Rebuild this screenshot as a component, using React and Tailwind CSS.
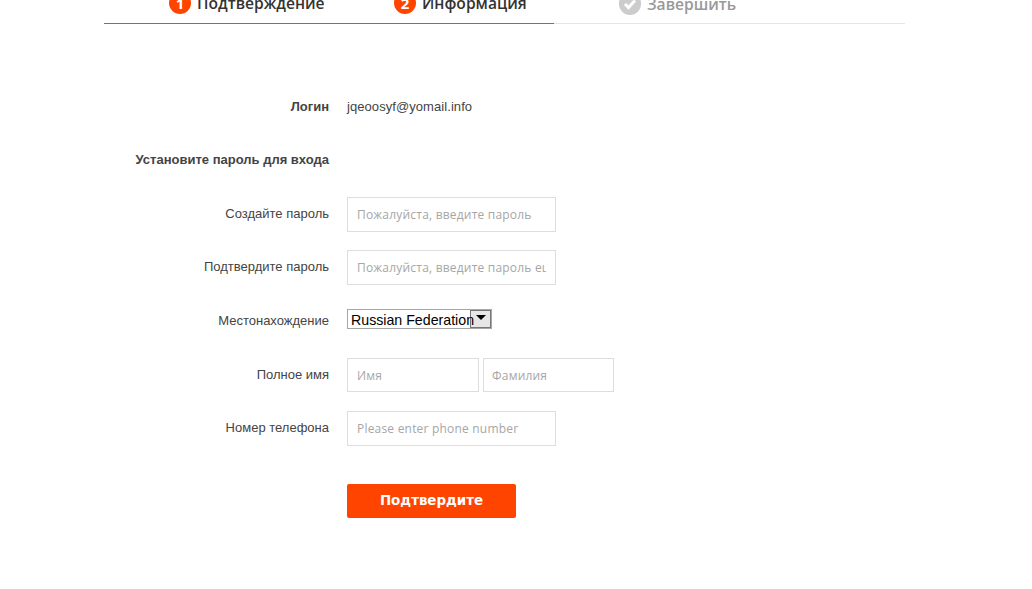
const sans = "font-['Liberation_Sans',Arial,sans-serif]";
const open = "font-['Open_Sans',sans-serif]";

function Step({ mark, label, muted = false, className = "" }) {
  return (
    <div className={`flex shrink-0 items-center gap-[6px] ${className}`}>
      {mark}
      <span className={`text-[15.6px] font-semibold leading-[20px] ${muted ? "text-[#999]" : "text-[#333]"}`}>{label}</span>
    </div>
  );
}

function Num({ n }) {
  return (
    <span className="flex h-[22px] w-[22px] items-center justify-center rounded-full bg-[#ff4400] text-[15px] font-bold text-white">{n}</span>
  );
}

function Check() {
  return (
    <span className="flex h-[23px] w-[22px] items-center justify-center rounded-full bg-[#ccc]">
      <svg viewBox="0 0 16 16" className="h-[16px] w-[16px]" fill="none" stroke="#fff" strokeWidth="3">
        <path d="M3 8l3.5 3.5L13 4.5" />
      </svg>
    </span>
  );
}

function Row({ label, bold = false, className = "", children }) {
  return (
    <div className={`flex items-start gap-[18px] ${className}`}>
      <div className={`w-[329px] shrink-0 text-right text-[13px] text-[#444] ${bold ? "font-bold" : ""}`}>{label}</div>
      {children}
    </div>
  );
}

function Field({ placeholder, className = "h-[35px] w-[209px] px-[9px]" }) {
  return (
    <input
      placeholder={placeholder}
      className={`${className} border border-[#ddd] bg-white ${open} text-[12px] tracking-[0.2px] text-[#333] outline-none placeholder:text-[#a6a6a6]`}
    />
  );
}

export default function App() {
  return (
    <div className={`h-[589px] w-[1032px] overflow-hidden bg-white ${sans}`}>
      <div className={`ml-[104px] mt-[-8px] h-[32px] w-[801px] border-b border-[#e5e5e5] ${open}`}>
        <div className="flex h-[32px] w-[450px] items-start border-b border-[#ff4400] pl-[65px]">
          <Step mark={<Num n="1" />} label="Подтверждение" className="w-[225px]" />
          <Step mark={<Num n="2" />} label="Информация" className="w-[225px]" />
          <Step mark={<Check />} label="Завершить" muted className="gap-[5px]" />
        </div>
      </div>

      <Row label="Логин" bold className="mt-[75px] h-[16px] leading-[16px]">
        <span className="text-[13px] tracking-[0.07px] text-[#444]">jqeoosyf@yomail.info</span>
      </Row>

      <Row label="Установите пароль для входа" bold className="mt-[37px] h-[16px] leading-[16px]" />

      <div className="mt-[29px] flex flex-col">
        <Row label={<span className="block pt-[7px]">Создайте пароль</span>}>
          <Field placeholder="Пожалуйста, введите пароль" />
        </Row>
        <Row label={<span className="block pt-[7px]">Подтвердите пароль</span>} className="mt-[18px]">
          <Field placeholder="Пожалуйста, введите пароль еще раз" />
        </Row>
        <Row label={<span className="block pt-[2px]">Местонахождение</span>} className="mt-[24px] h-[49px]">
          <div className="relative h-[20px] w-[145px] border border-[#a6a6a6] bg-white pl-[3px] text-[14.2px] leading-[20px] text-black">
            <span className="relative z-10 whitespace-nowrap">Russian Federation</span>
            <span className="absolute right-0 top-0 flex h-[18px] w-[21px] items-start justify-center border border-[#777] bg-[#e6e6e6] pt-[4px]">
              <span className="h-0 w-0 border-x-[5px] border-t-[5px] border-x-transparent border-t-black" />
            </span>
          </div>
        </Row>
        <Row label={<span className="block pt-[7px]">Полное имя</span>}>
          <div className="flex gap-[4px]">
            <Field placeholder="Имя" className="h-[34px] w-[132px] px-[9px]" />
            <Field placeholder="Фамилия" className="h-[34px] w-[131px] px-[8px]" />
          </div>
        </Row>
        <Row label={<span className="block pt-[7px]">Номер телефона</span>} className="mt-[19px]">
          <Field placeholder="Please enter phone number" />
        </Row>
        <Row label="" className="mt-[38px]">
          <button className="h-[34px] w-[169px] rounded-[2px] bg-[#ff4400] pt-[1px] font-['DejaVu_Sans',sans-serif] text-[13.4px] font-bold text-white">Подтвердите</button>
        </Row>
      </div>
    </div>
  );
}
